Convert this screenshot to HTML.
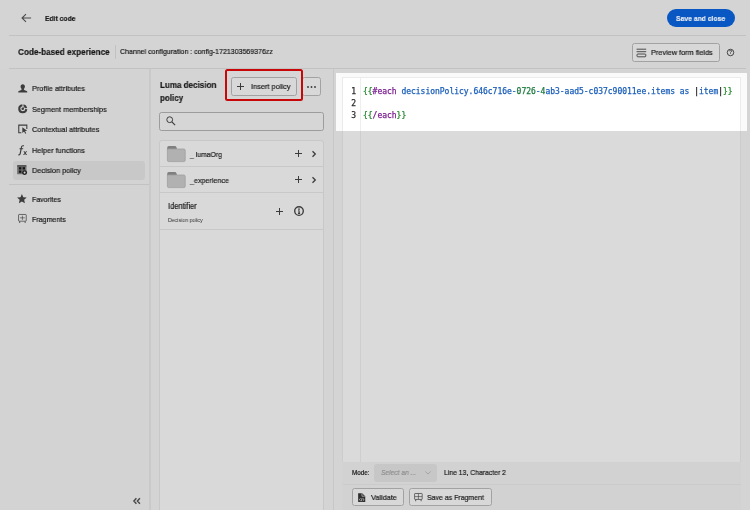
<!DOCTYPE html>
<html><head><meta charset="utf-8"><title>Edit code</title>
<style>
*{box-sizing:border-box;margin:0;padding:0}
html,body{width:750px;height:510px;overflow:hidden}
body{background:#d4d4d4;font-family:"Liberation Sans",sans-serif;color:#191919;position:relative;font-size:8px}
.abs{position:absolute}
.t{position:absolute;white-space:nowrap;line-height:12px;height:12px;transform-origin:0 50%;will-change:transform;-webkit-text-stroke:0.2px currentColor}
pre{will-change:transform;-webkit-text-stroke:0.25px currentColor}
.hl{position:absolute;background:#c2c2c2}
.btn{position:absolute;border:1px solid #a2a2a2;border-radius:2.5px;background:#d8d8d8}
svg{position:absolute;overflow:visible}
.ic{fill:#3c3c3c}
.st{fill:none;stroke:#3c3c3c}
</style></head><body>

<!-- top bar -->
<svg style="left:20.7px;top:13.2px" width="11" height="10" viewBox="0 0 11 10"><path d="M10.1 5H1M5 1.1L1 5l4 3.900" fill="none" stroke="#4a4a4a" stroke-width="1.050"/></svg>
<div class="abs" style="left:666.7px;top:8.8px;width:68px;height:18.2px;border-radius:9.1px;background:#0857c2"></div>
<div class="hl" style="left:9px;top:35px;width:737px;height:1px"></div>

<!-- second bar -->
<div class="hl" style="left:115px;top:45px;width:1px;height:14px"></div>
<div class="btn" style="left:631.5px;top:43px;width:88px;height:18.5px"></div>
<svg style="left:636px;top:47.5px" width="11" height="10" viewBox="0 0 11 10"><path class="st" d="M0.6 1.2h9.6M0.6 3.7h9.6" stroke-width="0.9"/><rect class="st" x="1" y="6" width="8.8" height="2.8" rx="0.8" stroke-width="0.9"/></svg>
<svg style="left:726.2px;top:47.6px;will-change:transform" width="9" height="9" viewBox="0 0 9 9"><circle class="st" cx="4.5" cy="4.5" r="3.25" stroke-width="0.95"/><text x="4.5" y="6.3" font-size="5" font-weight="bold" text-anchor="middle" fill="#333" font-family="Liberation Sans, sans-serif">?</text></svg>
<div class="hl" style="left:9px;top:68px;width:737px;height:1px"></div>

<!-- left nav -->
<div class="abs" style="left:0;top:69px;width:149px;height:441px;background:#d3d3d3"></div>
<div class="abs" style="left:13px;top:161.100px;width:132px;height:18.700px;border-radius:3px;background:#c8c8c8"></div>
<div class="hl" style="left:9px;top:184px;width:140px;height:1px"></div>
<!-- profile -->
<svg style="left:17.5px;top:84px" width="9.5" height="9" viewBox="0 0 19 18"><path class="ic" d="M9.5 0.5c2.6 0 4.3 1.9 4.3 4.6 0 1.9-0.9 3.7-2 4.6v1.3c0 .5.3.9.8 1.1l4.6 1.7c.8.3 1.3 1 1.3 1.8V17H0.500v-1.400c0-.8.5-1.500 1.300-1.800l4.600-1.700c.5-.2.800-.6.800-1.100V9.700c-1.100-.9-2-2.700-2-4.600 0-2.700 1.700-4.600 4.300-4.600z"/></svg>
<!-- segment -->
<svg style="left:17.500px;top:104.300px" width="9.500" height="9.500" viewBox="0 0 20 20"><path class="st" d="M9.300 2.600A7.400 7.400 0 1 0 17.400 10.700" stroke-width="4.400"/><path class="ic" d="M11.800 0.600a9.600 9.600 0 0 1 7.600 7.600l-4.300.5a5.400 5.400 0 0 0-3.800-3.800z"/><circle class="ic" cx="10" cy="10" r="2.700"/><path class="st" d="M10 10l4.200-4.200" stroke-width="1.800"/></svg>
<!-- contextual -->
<svg style="left:17.5px;top:124.3px" width="9.6" height="9.8" viewBox="0 0 20 20"><path class="ic" d="M0.500 1h19v9h-2.200V3.200H2.700v13.600H7V19H0.500z"/><path class="ic" d="M9 6.500l10 7.300-4.300.8 2.400 4.300-2 1.100-2.400-4.400L9 18.500z"/></svg>
<!-- fx -->
<svg style="left:17.8px;top:144.6px" width="9" height="10.400" viewBox="0 0 18 21"><path class="ic" d="M9.800 0.500c1 0 1.900.2 2.500.5l-.6 1.800c-.5-.2-1-.4-1.600-.4-1.200 0-1.800.8-2.200 2.700l-.3 1.500h2.900l-.4 1.900H7.300L5.600 17c-.5 2.700-1.700 4-3.900 4-.6 0-1.200-.1-1.600-.3l.5-1.900c.3.100.6.2 1 .2.900 0 1.400-.6 1.700-2.100l1.600-8.400H2.800l.4-1.900h2.100l.3-1.500C6.200 1.900 7.500.5 9.800.5z"/><path class="ic" d="M10.800 12.500h2.400l1.300 2.200 1.600-2.200h2.300l-2.800 3.600 2.600 3.900h-2.400l-1.500-2.500-1.800 2.500h-2.300l3-3.900z"/></svg>
<!-- decision -->
<svg style="left:17px;top:164.900px" width="10" height="10" viewBox="0 0 20 20"><rect x="0.300" y="0.300" width="18.600" height="18" rx="1" fill="#6f6f6f"/><rect x="0.300" y="0.300" width="18.600" height="2.600" rx="1" fill="#4a4a4a"/><rect x="3.800" y="4.400" width="4.800" height="4.600" fill="#141414"/><rect x="11.200" y="4.400" width="4.800" height="4.600" fill="#141414"/><rect x="3.800" y="11" width="4.800" height="4.600" fill="#141414"/><circle cx="15.200" cy="15.200" r="4.900" fill="#1c1c1c"/><circle cx="15.200" cy="15.200" r="2.100" fill="#cfcfcf"/></svg>
<!-- star -->
<svg style="left:17.3px;top:194.300px" width="9.800" height="9.200" viewBox="0 0 20 19"><path class="ic" d="M10 0l2.900 6.500 7.100.7-5.300 4.700 1.500 7L10 15.300 3.800 18.900l1.500-7L0 7.200l7.100-.7z"/></svg>
<!-- fragments -->
<svg style="left:17.800px;top:214.200px" width="8.800" height="9.600" viewBox="0 0 18 20"><rect class="st" x="1" y="1" width="16" height="14" rx="1.200" stroke-width="1.500"/><path class="st" d="M9 3.500v9M4 8h10" stroke-width="1.300"/><path class="st" d="M3.300 15.500v3.300M14.700 15.500v3.300" stroke-width="1.700"/></svg>
<svg style="left:132.700px;top:497.800px" width="7.300" height="6.100" viewBox="0 0 7.300 6.100"><path d="M3.400 0.300L0.900 3.050 3.400 5.800M6.900 0.300L4.400 3.050l2.500 2.750" fill="none" stroke="#484848" stroke-width="1.450"/></svg>
<div class="hl" style="left:149px;top:69px;width:1.500px;height:441px;background:#c9c9c9"></div>

<!-- middle panel -->
<div class="btn" style="left:301.500px;top:77.200px;width:19.300px;height:18.400px"></div>
<svg style="left:307px;top:85.500px" width="10" height="2" viewBox="0 0 10 2"><circle class="ic" cx="1" cy="1" r="0.950"/><circle class="ic" cx="4.500" cy="1" r="0.950"/><circle class="ic" cx="8" cy="1" r="0.950"/></svg>
<div class="abs" style="left:224.800px;top:68.700px;width:78px;height:32.800px;border:2px solid #c80808;border-radius:2.500px;background:#d6d6d6"></div>
<div class="btn" style="left:231.200px;top:77.200px;width:66px;height:18.400px"></div>
<svg style="left:237.200px;top:83px" width="7" height="7" viewBox="0 0 7 7"><path class="st" d="M3.500 0v7M0 3.500h7" stroke-width="1"/></svg>
<div class="btn" style="left:159px;top:112px;width:164.800px;height:18.600px;background:#d6d6d6;border-color:#9c9c9c"></div>
<svg style="left:165.600px;top:116.400px" width="10" height="10" viewBox="0 0 10 10"><circle class="st" cx="3.700" cy="3.700" r="2.900" stroke-width="1"/><path class="st" d="M5.900 5.900l3.200 3.200" stroke-width="1.200"/></svg>
<div class="abs" style="left:159.200px;top:140.200px;width:164.400px;height:380px;border:1px solid #c8c8c8;border-radius:3px;background:#d9d9d9"></div>
<div class="hl" style="left:160px;top:166px;width:163px;height:1px;background:#c8c8c8"></div>
<div class="hl" style="left:160px;top:192px;width:163px;height:1px;background:#c8c8c8"></div>
<div class="hl" style="left:160px;top:229px;width:163px;height:1px;background:#c8c8c8"></div>
<!-- folders -->
<svg style="left:167.300px;top:145.500px" width="18.600" height="16" viewBox="0 0 18.600 16"><path d="M0.200 3.800V1.700Q0.200 0.100 1.800 0.100H7.900Q9 0.100 9.400 1.300L10.200 3.800z" fill="#7f7f7f"/><path d="M0.400 3H16.800Q18.200 3 18.200 4.400V14.200Q18.200 15.600 16.800 15.600H1.800Q0.400 15.600 0.400 14.200z" fill="#b1b1b1" stroke="#9f9f9f" stroke-width="0.800"/></svg>
<svg style="left:167.300px;top:171.500px" width="18.600" height="16" viewBox="0 0 18.600 16"><path d="M0.200 3.800V1.700Q0.200 0.100 1.800 0.100H7.900Q9 0.100 9.400 1.300L10.200 3.800z" fill="#7f7f7f"/><path d="M0.400 3H16.800Q18.200 3 18.200 4.400V14.200Q18.200 15.600 16.800 15.600H1.800Q0.400 15.600 0.400 14.200z" fill="#b1b1b1" stroke="#9f9f9f" stroke-width="0.800"/></svg>
<!-- plus / chevrons / info -->
<svg style="left:295.200px;top:150.200px" width="7" height="7" viewBox="0 0 7 7"><path class="st" d="M3.500 0v7M0 3.500h7" stroke-width="1"/></svg>
<svg style="left:311.800px;top:150.700px" width="4" height="6" viewBox="0 0 4 6"><path class="st" d="M0.500 0.200L3.300 3 0.500 5.800" stroke-width="1.300" stroke="#2c2c2c"/></svg>
<svg style="left:295.200px;top:176.100px" width="7" height="7" viewBox="0 0 7 7"><path class="st" d="M3.500 0v7M0 3.500h7" stroke-width="1"/></svg>
<svg style="left:311.800px;top:176.600px" width="4" height="6" viewBox="0 0 4 6"><path class="st" d="M0.500 0.200L3.300 3 0.500 5.800" stroke-width="1.300" stroke="#2c2c2c"/></svg>
<svg style="left:275.800px;top:208px" width="7" height="7" viewBox="0 0 7 7"><path class="st" d="M3.500 0v7M0 3.500h7" stroke-width="1"/></svg>
<svg style="left:294px;top:206.100px" width="10" height="10" viewBox="0 0 10 10"><circle class="st" cx="5" cy="5" r="4.300" stroke-width="1.350"/><circle class="ic" cx="5" cy="3.100" r="0.850"/><path class="st" d="M5.100 4.500v3M4.200 4.700h1M4 7.300h2.100" stroke-width="1.150"/></svg>
<div class="hl" style="left:332.500px;top:69px;width:1.700px;height:441px;background:#c7c7c7"></div>

<!-- editor -->
<div class="abs" style="left:342.100px;top:77.100px;width:399.400px;height:432.900px;background:#d2d2d2"></div>
<div class="abs" style="left:342.100px;top:77.100px;width:399.400px;height:384.500px;background:#dadada;border:1px solid #cccccc;border-bottom:none"></div>
<div class="abs" style="left:336.400px;top:73.300px;width:410.200px;height:57.700px;background:#fafafa"></div>
<div class="abs" style="left:342.100px;top:77.100px;width:399.400px;height:53.900px;background:#fff;border:1px solid #ebebeb;border-bottom:none"></div>
<div class="abs" style="left:360.200px;top:78px;width:1px;height:53px;background:#eeeeee"></div>
<div class="abs" style="left:360.200px;top:131px;width:1px;height:330.600px;background:#cecece"></div>
<pre class="abs" style="left:346.200px;top:86.200px;width:10px;text-align:right;font-family:'DejaVu Sans Mono','Liberation Mono',monospace;font-size:8px;line-height:12px;color:#2b2b2b">1
2
3</pre>
<pre class="abs" style="left:363.100px;top:86.200px;font-family:'DejaVu Sans Mono','Liberation Mono',monospace;font-size:8px;letter-spacing:-0.018px;line-height:12px;color:#111"><span style="color:#23882a">{{</span><span style="color:#7a1f90">#each</span> <span style="color:#1b5fba">decisionPolicy.646c716e-</span><span style="color:#1f7a40">0726</span><span style="color:#1b5fba">-</span><span style="color:#1f7a40">4</span><span style="color:#1b5fba">ab3-aad5-c037c90011ee.items as </span>|<span style="color:#1b5fba">item</span>|<span style="color:#23882a">}}</span>

<span style="color:#23882a">{{</span><span style="color:#7a1f90">/each</span><span style="color:#23882a">}}</span></pre>

<!-- status bar -->
<div class="hl" style="left:342.600px;top:484px;width:398.700px;height:1px;background:#cbcbcb"></div>
<div class="abs" style="left:374.300px;top:464px;width:62.600px;height:18px;border-radius:3px;background:#c7c7c7"></div>
<svg style="left:425px;top:471.300px" width="6" height="4" viewBox="0 0 6 4"><path d="M0.400 0.400L3 3.100 5.600 0.400" fill="none" stroke="#a2a2a2" stroke-width="0.900"/></svg>
<div class="btn" style="left:352.200px;top:488.300px;width:52.200px;height:18.200px"></div>
<svg style="left:357.800px;top:492.800px" width="7.400" height="9.200" viewBox="0 0 15 18.500"><path fill="#2e2e2e" d="M0.300 0.300h8.200l6.200 6v12H0.300z"/><path d="M8 0.800v5.700h6" fill="none" stroke="#d6d6d6" stroke-width="1.300"/><path d="M5.300 10.800L2.500 13.300l2.800 2.500M9.700 10.800l2.800 2.500-2.800 2.500M8.300 10.200l-1.600 6.200" fill="none" stroke="#d8d8d8" stroke-width="1.400"/></svg>
<div class="btn" style="left:409px;top:488.300px;width:83px;height:18.200px"></div>
<svg style="left:414.300px;top:493px" width="8.800" height="8.600" viewBox="0 0 18 18"><rect class="st" x="1" y="1" width="16" height="12.500" rx="1.200" stroke-width="1.500"/><path class="st" d="M9 1.500v11.500M1.500 7.500h15" stroke-width="1.300"/><path class="st" d="M3.300 14v3.300M14.700 14v3.300" stroke-width="1.700"/></svg>

<div class="t" style="left:44.8px;top:13.00px;font-size:8.0px;font-weight:bold;transform:scaleX(0.847)">Edit code</div>
<div class="t" style="left:676.2px;top:13.00px;font-size:8.1px;font-weight:bold;color:#e4e8f0;transform:scaleX(0.841)">Save and close</div>
<div class="t" style="left:18.3px;top:46.00px;font-size:9.9px;font-weight:bold;transform:scaleX(0.827)">Code-based experience</div>
<div class="t" style="left:120.1px;top:46.00px;font-size:8.0px;transform:scaleX(0.877)">Channel configuration : config-1721303569376zz</div>
<div class="t" style="left:650.6px;top:47.00px;font-size:8.0px;transform:scaleX(0.913)">Preview form fields</div>
<div class="t" style="left:32px;top:83.00px;font-size:8.0px;transform:scaleX(0.917)">Profile attributes</div>
<div class="t" style="left:32px;top:104.00px;font-size:8.0px;transform:scaleX(0.909)">Segment memberships</div>
<div class="t" style="left:32px;top:124.00px;font-size:8.0px;transform:scaleX(0.916)">Contextual attributes</div>
<div class="t" style="left:32px;top:145.00px;font-size:8.0px;transform:scaleX(0.915)">Helper functions</div>
<div class="t" style="left:32px;top:165.00px;font-size:8.0px;transform:scaleX(0.916)">Decision policy</div>
<div class="t" style="left:32px;top:194.00px;font-size:8.0px;transform:scaleX(0.875)">Favorites</div>
<div class="t" style="left:32px;top:214.00px;font-size:8.0px;transform:scaleX(0.884)">Fragments</div>
<div class="t" style="left:159.8px;top:79.00px;font-size:9.4px;font-weight:bold;transform:scaleX(0.858)">Luma decision</div>
<div class="t" style="left:159.8px;top:92.00px;font-size:9.4px;font-weight:bold;transform:scaleX(0.853)">policy</div>
<div class="t" style="left:250.5px;top:81.00px;font-size:8.0px;transform:scaleX(0.923)">Insert policy</div>
<div class="t" style="left:190.3px;top:149.00px;font-size:8.0px;transform:scaleX(0.854)">_ lumaOrg</div>
<div class="t" style="left:190.3px;top:175.00px;font-size:8.0px;transform:scaleX(0.892)">_experience</div>
<div class="t" style="left:167.6px;top:200.00px;font-size:8.6px;transform:scaleX(0.871)">Identifier</div>
<div class="t" style="left:167.6px;top:214.00px;font-size:5.7px;color:#333;-webkit-text-stroke:0;transform:scaleX(0.917)">Decision policy</div>
<div class="t" style="left:352.2px;top:467.00px;font-size:6.3px;transform:scaleX(0.999)">Mode:</div>
<div class="t" style="left:381.3px;top:467.00px;font-size:8.0px;font-style:italic;color:#8f8f8f;transform:scaleX(0.833)">Select an ...</div>
<div class="t" style="left:444.3px;top:467.00px;font-size:8.0px;transform:scaleX(0.854)">Line 13, Character 2</div>
<div class="t" style="left:370.5px;top:492.00px;font-size:8.0px;transform:scaleX(0.911)">Validate</div>
<div class="t" style="left:427.3px;top:492.00px;font-size:8.0px;transform:scaleX(0.869)">Save as Fragment</div>

</body></html>
